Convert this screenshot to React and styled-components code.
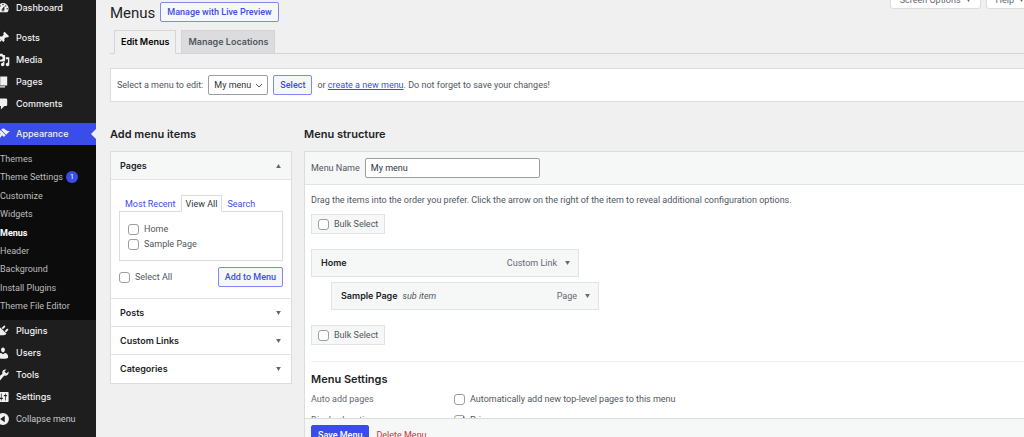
import styled, { createGlobalStyle, css } from 'styled-components';
import { useState } from 'react';

const icons = {
    dashboard: 'M3.76 16h12.48c1.1-1.37 1.76-3.11 1.76-5 0-4.42-3.58-8-8-8s-8 3.58-8 8c0 1.89.66 3.63 1.76 5zM10 4c.55 0 1 .45 1 1s-.45 1-1 1-1-.45-1-1 .45-1 1-1zM6 6c.55 0 1 .45 1 1s-.45 1-1 1-1-.45-1-1 .45-1 1-1zm8 0c.55 0 1 .45 1 1s-.45 1-1 1-1-.45-1-1 .45-1 1-1zm-5.37 5.55L12 7v6c0 1.1-.9 2-2 2s-2-.9-2-2c0-.57.24-1.08.63-1.45zM4 10c.55 0 1 .45 1 1s-.45 1-1 1-1-.45-1-1 .45-1 1-1zm12 0c.55 0 1 .45 1 1s-.45 1-1 1-1-.45-1-1 .45-1 1-1zm-5 3c0-.55-.45-1-1-1s-1 .45-1 1 .45 1 1 1 1-.45 1-1z',
    posts: 'M10.44 3.02l1.82-1.82 6.36 6.35-1.83 1.82c-1.05-.68-2.48-.57-3.41.36l-.75.75c-.92.93-1.04 2.35-.35 3.41l-1.83 1.82-2.41-2.41-2.8 2.79c-.42.42-3.38 2.71-3.8 2.29s1.86-3.39 2.28-3.81l2.79-2.79L4.1 9.36l1.83-1.82c1.05.69 2.48.57 3.4-.36l.75-.75c.93-.92 1.05-2.35.36-3.41z',
    media: 'M13 11V4c0-.55-.45-1-1-1h-1.67L9 1H5L3.67 3H2c-.55 0-1 .45-1 1v7c0 .55.45 1 1 1h10c.55 0 1-.45 1-1zM7 4.5c1.38 0 2.5 1.12 2.5 2.5S8.38 9.5 7 9.5 4.5 8.38 4.5 7 5.62 4.5 7 4.5zM14 6h5v10.5c0 1.38-1.12 2.5-2.5 2.5S14 17.88 14 16.5s1.12-2.5 2.5-2.5c.17 0 .34.02.5.05V9h-3V6zm-4 8.05V13h2v3.5c0 1.38-1.12 2.5-2.5 2.5S7 17.88 7 16.5 8.12 14 9.5 14c.17 0 .34.02.5.05z',
    pages: 'M6 15V2h10v13H6zm-1 1h8v2H3V5h2v11z',
    comments: 'M5 2h9q.82 0 1.41.59T16 4v7q0 .82-.59 1.41T14 13h-2l-5 5v-5H5q-.82 0-1.41-.59T3 11V4q0-.82.59-1.41T5 2z',
    appearance: 'M14.48 11.06L7.41 3.99l1.5-1.5c.5-.56 2.3-.47 3.51.32 1.21.8 1.43 1.28 2.91 2.1 1.18.64 2.45 1.26 4.45.85zm-.71.71L6.7 4.7 4.93 6.47c-.39.39-.39 1.02 0 1.41l1.06 1.06c.39.39.39 1.03 0 1.42-.6.6-1.43 1.11-2.21 1.69-.35.26-.7.53-1.01.84C1.43 14.23.4 16.08 1.4 17.07c.99 1 2.84-.03 4.18-1.36.31-.31.58-.66.85-1.02.57-.78 1.08-1.61 1.69-2.21.39-.39 1.02-.39 1.41 0l1.06 1.06c.39.39 1.02.39 1.41 0z',
    plugins: 'M13.11 4.36L9.87 7.6 8 5.73l3.24-3.24c.35-.34 1.05-.2 1.56.32.52.51.66 1.21.31 1.55zm-8 1.77l.91-1.12 9.01 9.01-1.19.84c-.71.71-2.63 1.16-3.82 1.16H6.14L4.9 17.26c-.59.59-1.54.59-2.12 0-.59-.58-.59-1.53 0-2.12l1.24-1.24v-3.88c0-1.13.4-3.19 1.09-3.89zm7.26 3.97l3.24-3.24c.34-.35 1.04-.21 1.55.31.52.51.66 1.21.31 1.55l-3.24 3.25z',
    users: 'M10 9.25c-2.27 0-2.73-3.44-2.73-3.44C7 4.02 7.82 2 9.97 2c2.16 0 2.98 2.02 2.71 3.81 0 0-.41 3.44-2.68 3.44zm0 2.57L12.72 10c2.39 0 4.52 2.33 4.52 4.53v2.49s-3.65 1.13-7.24 1.13c-3.65 0-7.24-1.13-7.24-1.13v-2.49c0-2.25 1.94-4.48 4.47-4.48z',
    tools: 'M16.68 9.77c-1.34 1.34-3.3 1.67-4.95.99l-5.41 6.52c-.99.99-2.59.99-3.58 0s-.99-2.59 0-3.57l6.52-5.42c-.68-1.65-.35-3.61.99-4.95 1.28-1.28 3.12-1.62 4.72-1.06l-2.89 2.89 2.82 2.82 2.86-2.87c.53 1.58.18 3.39-1.08 4.65zM3.81 16.21c.4.39 1.04.39 1.43 0 .4-.4.4-1.04 0-1.43-.39-.4-1.03-.4-1.43 0-.39.39-.39 1.03 0 1.43z',
    settings: 'M18 16V4c0-.55-.45-1-1-1H3c-.55 0-1 .45-1 1v12c0 .55.45 1 1 1h14c.55 0 1-.45 1-1zM8 11h1c.55 0 1 .45 1 1s-.45 1-1 1H8v1.5c0 .28-.22.5-.5.5s-.5-.22-.5-.5V13H6c-.55 0-1-.45-1-1s.45-1 1-1h1V5.5c0-.28.22-.5.5-.5s.5.22.5.5V11zm5-2h-1c-.55 0-1-.45-1-1s.45-1 1-1h1V5.5c0-.28.22-.5.5-.5s.5.22.5.5V7h1c.55 0 1 .45 1 1s-.45 1-1 1h-1v5.5c0 .28-.22.5-.5.5s-.5-.22-.5-.5V9z',
    collapse: 'M10 1.5a8.5 8.5 0 1 0 0 17a8.5 8.5 0 1 0 0-17zM12.5 5.5v9L6 10z'
};

const mainLinks = [
    { name: 'Posts', icon: 'posts' },
    { name: 'Media', icon: 'media' },
    { name: 'Pages', icon: 'pages' },
    { name: 'Comments', icon: 'comments' }
];

const themeLinks = ['Themes', 'Theme Settings', 'Customize', 'Widgets', 'Menus', 'Header', 'Background', 'Install Plugins', 'Theme File Editor'];

const toolLinks = [
    { name: 'Plugins', icon: 'plugins' },
    { name: 'Users', icon: 'users' },
    { name: 'Tools', icon: 'tools' },
    { name: 'Settings', icon: 'settings' }
];

function Icon({ name }) {
    return (
        <IconSvg viewBox='0 0 20 20' aria-hidden='true'>
            <path fillRule='evenodd' d={icons[name]} />
        </IconSvg>
    );
}

function Arrow({ up }) {
    return (
        <ArrowSvg viewBox='0 0 6 5' aria-hidden='true'>
            <path d={up ? 'M0 5L3 0L6 5z' : 'M0 0L6 0L3 5z'} />
        </ArrowSvg>
    );
}

function NavItem({ name, icon, active }) {
    return (
        <li>
            <NavLink href='#' $active={active}>
                <Icon name={icon} />
                {name}
            </NavLink>
        </li>
    );
}

function Sidebar() {
    return (
        <Nav>
            <NavGroup>
                <NavItem name='Dashboard' icon='dashboard' />
            </NavGroup>
            <NavGroup>
                {mainLinks.map((link) => <NavItem key={link.name} {...link} />)}
            </NavGroup>
            <NavGroup>
                <NavItem name='Appearance' icon='appearance' active />
                <li>
                    <SubMenu>
                        {themeLinks.map((name) => (
                            <li key={name}>
                                <SubLink href='#' $current={name === 'Menus'}>
                                    {name}
                                    {name === 'Theme Settings' && <Badge>1</Badge>}
                                </SubLink>
                            </li>
                        ))}
                    </SubMenu>
                </li>
                {toolLinks.map((link) => <NavItem key={link.name} {...link} />)}
                <li>
                    <Collapse type='button'>
                        <Icon name='collapse' />
                        Collapse menu
                    </Collapse>
                </li>
            </NavGroup>
        </Nav>
    );
}

function AddItems() {
    return (
        <AddColumn>
            <Heading>Add menu items</Heading>
            <Accordion>
                <AccordionHead type='button' $open>
                    Pages
                    <Arrow up />
                </AccordionHead>
                <AccordionBody>
                    <PageTabs>
                        <PageTab type='button'>Most Recent</PageTab>
                        <PageTab type='button' $active>View All</PageTab>
                        <PageTab type='button'>Search</PageTab>
                    </PageTabs>
                    <PageList>
                        <Check><input type='checkbox' />Home</Check>
                        <Check><input type='checkbox' />Sample Page</Check>
                    </PageList>
                    <AddActions>
                        <Check><input type='checkbox' />Select All</Check>
                        <Button type='button'>Add to Menu</Button>
                    </AddActions>
                </AccordionBody>
                {['Posts', 'Custom Links', 'Categories'].map((name) => (
                    <AccordionHead key={name} type='button'>
                        {name}
                        <Arrow />
                    </AccordionHead>
                ))}
            </Accordion>
        </AddColumn>
    );
}

function Structure() {
    const [menuName, setMenuName] = useState('My menu');

    return (
        <StructureColumn>
            <Heading>Menu structure</Heading>
            <StructureBox>
                <NameRow>
                    <label htmlFor='menu-name'>Menu Name</label>
                    <NameInput id='menu-name' value={menuName} onChange={(e) => setMenuName(e.target.value)} />
                </NameRow>
                <StructureBody>
                    <Hint>Drag the items into the order you prefer. Click the arrow on the right of the item to reveal additional configuration options.</Hint>
                    <BulkSelect><input type='checkbox' />Bulk Select</BulkSelect>
                    <MenuList>
                        <MenuItem>
                            <strong>Home</strong>
                            <span>Custom Link</span>
                            <Toggle type='button' aria-label='Edit Home'><Arrow /></Toggle>
                        </MenuItem>
                        <MenuItem $sub>
                            <strong>Sample Page</strong>
                            <em>sub item</em>
                            <span>Page</span>
                            <Toggle type='button' aria-label='Edit Sample Page'><Arrow /></Toggle>
                        </MenuItem>
                    </MenuList>
                    <BulkSelect><input type='checkbox' />Bulk Select</BulkSelect>
                    <Settings>
                        <h3>Menu Settings</h3>
                        <SettingRow>
                            <span>Auto add pages</span>
                            <Check><input type='checkbox' />Automatically add new top-level pages to this menu</Check>
                        </SettingRow>
                        <SettingRow>
                            <span>Display location</span>
                            <Check><input type='checkbox' defaultChecked />Primary</Check>
                        </SettingRow>
                    </Settings>
                </StructureBody>
                <SaveBar>
                    <Button type='button' $primary>Save Menu</Button>
                    <DeleteLink href='#'>Delete Menu</DeleteLink>
                </SaveBar>
            </StructureBox>
        </StructureColumn>
    );
}

function App() {
    return (
        <>
            <GlobalStyle />
            <Page>
                <Sidebar />
                <Content>
                    <Header>
                        <h1>Menus</h1>
                        <Button type='button'>Manage with Live Preview</Button>
                        <ScreenLinks>
                            <ScreenButton type='button'>Screen Options <Arrow /></ScreenButton>
                            <ScreenButton type='button'>Help <Arrow /></ScreenButton>
                        </ScreenLinks>
                    </Header>
                    <Tabs>
                        <Tab href='#' $active>Edit Menus</Tab>
                        <Tab href='#'>Manage Locations</Tab>
                    </Tabs>
                    <ManageBar>
                        <label htmlFor='menu-select'>Select a menu to edit:</label>
                        <SelectWrap>
                            <MenuSelect id='menu-select'>
                                <option>My menu</option>
                            </MenuSelect>
                            <svg viewBox='0 0 8 5' aria-hidden='true'><path d='M1 1L4 4L7 1' /></svg>
                        </SelectWrap>
                        <Button type='button'>Select</Button>
                        <p>or <a href='#'>create a new menu</a>. Do not forget to save your changes!</p>
                    </ManageBar>
                    <Columns>
                        <AddItems />
                        <Structure />
                    </Columns>
                </Content>
            </Page>
        </>
    );
}

export default App;

const headingFont = `Inter, 'Liberation Sans', sans-serif`;

const GlobalStyle = createGlobalStyle`
    * {
        box-sizing: border-box;
    }
    body {
        margin: 0;
        background-color: #f0f0f0;
        color: #50575e;
        font-family: Roboto, 'Liberation Sans', sans-serif;
        font-size: 9px;
        line-height: 12px;
    }
    h1, h2, h3, p, ul {
        margin: 0;
        padding: 0;
    }
    ul {
        list-style: none;
    }
    button, input, select {
        margin: 0;
        font: inherit;
        color: inherit;
    }
    a {
        color: #3b4de8;
    }
    input[type='checkbox'] {
        appearance: none;
        flex-shrink: 0;
        width: 11px;
        height: 11px;
        border: 1px solid #9a9da1;
        border-radius: 3px;
        background-color: #ffffff;
    }
    input[type='checkbox']:checked {
        background-image: linear-gradient(135deg, transparent 50%, #3b4de8 50%);
    }
`

const Page = styled.div`
    display: flex;
    height: 100vh;
    overflow: hidden;
`

const IconSvg = styled.svg`
    flex-shrink: 0;
    width: 14px;
    height: 14px;
    margin-left: -4px;
    fill: #f0f0f1;
`

const ArrowSvg = styled.svg`
    flex-shrink: 0;
    width: 5px;
    height: 4px;
    fill: #646970;
`

const Nav = styled.nav`
    display: flex;
    flex-direction: column;
    flex-shrink: 0;
    gap: 8px;
    width: 96px;
    margin-top: -3px;
    background-color: #1e1e1e;
`

const NavGroup = styled.ul`
    display: flex;
    flex-direction: column;
`

const navRow = css`
    position: relative;
    display: flex;
    align-items: center;
    gap: 6px;
    width: 100%;
    height: 22px;
    padding: 0;
    font-family: ${headingFont};
    font-size: 9px;
    font-weight: 500;
    text-decoration: none;
    color: #f0f0f1;
`

const NavLink = styled.a`
    ${navRow}
    ${({ $active }) => $active && css`
        background-color: #3b4de8;
        &::after {
            content: '';
            position: absolute;
            right: 0;
            border: 5px solid transparent;
            border-right-color: #f0f0f0;
            border-left-width: 0;
        }
    `}
`

const Collapse = styled.button`
    ${navRow}
    border: none;
    background: none;
    font-family: inherit;
    font-weight: 400;
    color: #c8c9cb;
`

const SubMenu = styled.ul`
    display: flex;
    flex-direction: column;
    justify-content: space-between;
    height: 175px;
    padding: 5px 0;
    background-color: #0c0c0c;
`

const SubLink = styled.a`
    display: flex;
    align-items: center;
    gap: 3px;
    height: 18px;
    text-decoration: none;
    color: ${({ $current }) => $current ? '#ffffff' : '#bcbcbc'};
    font-weight: ${({ $current }) => $current ? 700 : 400};
`

const Badge = styled.span`
    width: 12px;
    height: 12px;
    border-radius: 50%;
    background-color: #3b4de8;
    color: #ffffff;
    font-size: 7px;
    text-align: center;
`

const Content = styled.main`
    flex: 1;
    min-width: 0;
    padding: 2px 0 0 14px;
`

const Header = styled.header`
    display: flex;
    align-items: flex-start;
    gap: 5px;
    height: 28px;
    h1 {
        font-size: 15px;
        font-weight: 400;
        line-height: 22px;
        color: #1d2327;
    }
`

const Button = styled.button`
    flex-shrink: 0;
    height: 20px;
    padding: 0 6px;
    border: 1px solid ${({ $primary }) => $primary ? '#3b4de8' : '#7d8af2'};
    border-radius: 2px;
    background-color: ${({ $primary }) => $primary ? '#3b4de8' : '#f6f7f7'};
    color: ${({ $primary }) => $primary ? '#ffffff' : '#3b4de8'};
    font-weight: 500;
    white-space: nowrap;
`

const ScreenLinks = styled.div`
    display: flex;
    gap: 5px;
    margin: -11px -10px 0 auto;
`

const ScreenButton = styled.button`
    display: flex;
    align-items: center;
    gap: 5px;
    height: 18px;
    padding: 0 9px;
    border: 1px solid #dcdcde;
    border-radius: 0 0 3px 3px;
    background-color: #ffffff;
    color: #646970;
`

const Tabs = styled.div`
    display: flex;
    gap: 5px;
    padding-left: 4px;
    border-bottom: 1px solid #d5d5d8;
`

const Tab = styled.a`
    height: 24px;
    margin-bottom: -1px;
    padding: 5px 6px;
    border: 1px solid #d5d5d8;
    border-bottom-color: ${({ $active }) => $active ? '#f0f0f0' : '#d5d5d8'};
    background-color: ${({ $active }) => $active ? '#f0f0f0' : '#dcdcde'};
    color: ${({ $active }) => $active ? '#000000' : '#50575e'};
    font-family: ${headingFont};
    font-weight: 600;
    text-decoration: none;
`

const ManageBar = styled.form`
    display: flex;
    align-items: center;
    gap: 5px;
    height: 34px;
    margin-top: 14px;
    padding-left: 6px;
    border: 1px solid #dcdcde;
    border-right: none;
    background-color: #ffffff;
    white-space: nowrap;
`

const SelectWrap = styled.div`
    position: relative;
    svg {
        position: absolute;
        top: 8px;
        right: 5px;
        width: 8px;
        height: 5px;
        fill: none;
        stroke: #50575e;
        pointer-events: none;
    }
`

const MenuSelect = styled.select`
    appearance: none;
    display: block;
    height: 20px;
    padding: 0 16px 0 5px;
    border: 1px solid #9a9da1;
    border-radius: 2px;
    background-color: #ffffff;
    color: #2c3338;
`

const Columns = styled.div`
    display: flex;
    align-items: flex-start;
    gap: 12px;
    padding-top: 24px;
`

const AddColumn = styled.section`
    flex-shrink: 0;
    width: 182px;
`

const StructureColumn = styled.section`
    flex: 1;
    min-width: 0;
`

const Heading = styled.h2`
    margin-bottom: 9px;
    font-family: ${headingFont};
    font-size: 11px;
    font-weight: 600;
    line-height: 16px;
    color: #1d2327;
`

const Accordion = styled.div`
    border: 1px solid #dcdcde;
    background-color: #ffffff;
`

const AccordionHead = styled.button`
    display: flex;
    align-items: center;
    justify-content: space-between;
    width: 100%;
    height: 28px;
    padding: 0 10px 0 9px;
    border: none;
    border-bottom: 1px solid #e3e3e5;
    background-color: ${({ $open }) => $open ? '#f6f7f7' : '#ffffff'};
    color: #1d2327;
    font-family: ${headingFont};
    font-weight: 600;
    &:last-child {
        border-bottom: none;
    }
`

const AccordionBody = styled.div`
    padding: 15px 8px 11px;
    border-bottom: 1px solid #e3e3e5;
`

const PageTabs = styled.div`
    display: flex;
    padding-left: 1px;
`

const PageTab = styled.button`
    height: 17px;
    margin-bottom: -1px;
    padding: 0 4px;
    border: 1px solid transparent;
    background-color: transparent;
    color: #3b4de8;
    white-space: nowrap;
    ${({ $active }) => $active && css`
        border-color: #dcdcde;
        border-bottom-color: #ffffff;
        background-color: #ffffff;
        color: #2c3338;
    `}
`

const PageList = styled.div`
    display: flex;
    flex-direction: column;
    gap: 3px;
    padding: 11px 8px 10px;
    border: 1px solid #dcdcde;
`

const Check = styled.label`
    display: flex;
    align-items: center;
    gap: 5px;
`

const AddActions = styled.div`
    display: flex;
    align-items: center;
    justify-content: space-between;
    padding-top: 6px;
`

const StructureBox = styled.div`
    border: 1px solid #dcdcde;
    border-right: none;
    background-color: #ffffff;
`

const NameRow = styled.div`
    display: flex;
    align-items: center;
    gap: 5px;
    height: 33px;
    padding: 0 6px;
    border-bottom: 1px solid #e3e3e5;
    background-color: #f6f7f7;
`

const NameInput = styled.input`
    width: 175px;
    height: 20px;
    padding: 0 5px;
    border: 1px solid #9a9da1;
    border-radius: 2px;
    background-color: #ffffff;
    color: #2c3338;
`

const StructureBody = styled.div`
    padding: 9px 0 20px 6px;
`

const Hint = styled.p`
    margin-bottom: 8px;
`

const BulkSelect = styled(Check)`
    width: fit-content;
    height: 20px;
    padding: 0 6px;
    border: 1px solid #e3e3e5;
    background-color: #f6f7f7;
`

const MenuList = styled.ul`
    display: flex;
    flex-direction: column;
    gap: 5px;
    padding: 15px 0;
`

const MenuItem = styled.li`
    display: flex;
    align-items: center;
    gap: 5px;
    max-width: 268px;
    height: 28px;
    margin-left: ${({ $sub }) => $sub ? '20px' : '0'};
    padding: 0 5px 0 9px;
    border: 1px solid #e3e3e5;
    background-color: #f6f7f7;
    strong {
        color: #1d2327;
        font-family: ${headingFont};
        font-weight: 600;
    }
    span {
        margin-left: auto;
        color: #646970;
    }
`

const Toggle = styled.button`
    display: flex;
    align-items: center;
    justify-content: center;
    width: 11px;
    height: 20px;
    padding: 0;
    border: none;
    background: none;
`

const Settings = styled.div`
    margin-top: 16px;
    padding-top: 9px;
    border-top: 1px solid #eeeeee;
    h3 {
        margin-bottom: 6px;
        font-family: ${headingFont};
        font-size: 11px;
        font-weight: 600;
        line-height: 16px;
        color: #1d2327;
    }
`

const SettingRow = styled.div`
    display: grid;
    grid-template-columns: 143px 1fr;
    margin-bottom: 9px;
    > span {
        color: #646970;
    }
`

const SaveBar = styled.div`
    position: sticky;
    bottom: -14px;
    display: flex;
    align-items: center;
    gap: 7px;
    padding: 6px;
    border-top: 1px solid #dcdcde;
    background-color: #f6f7f7;
`

const DeleteLink = styled.a`
    color: #c9353a;
    text-decoration: none;
`
